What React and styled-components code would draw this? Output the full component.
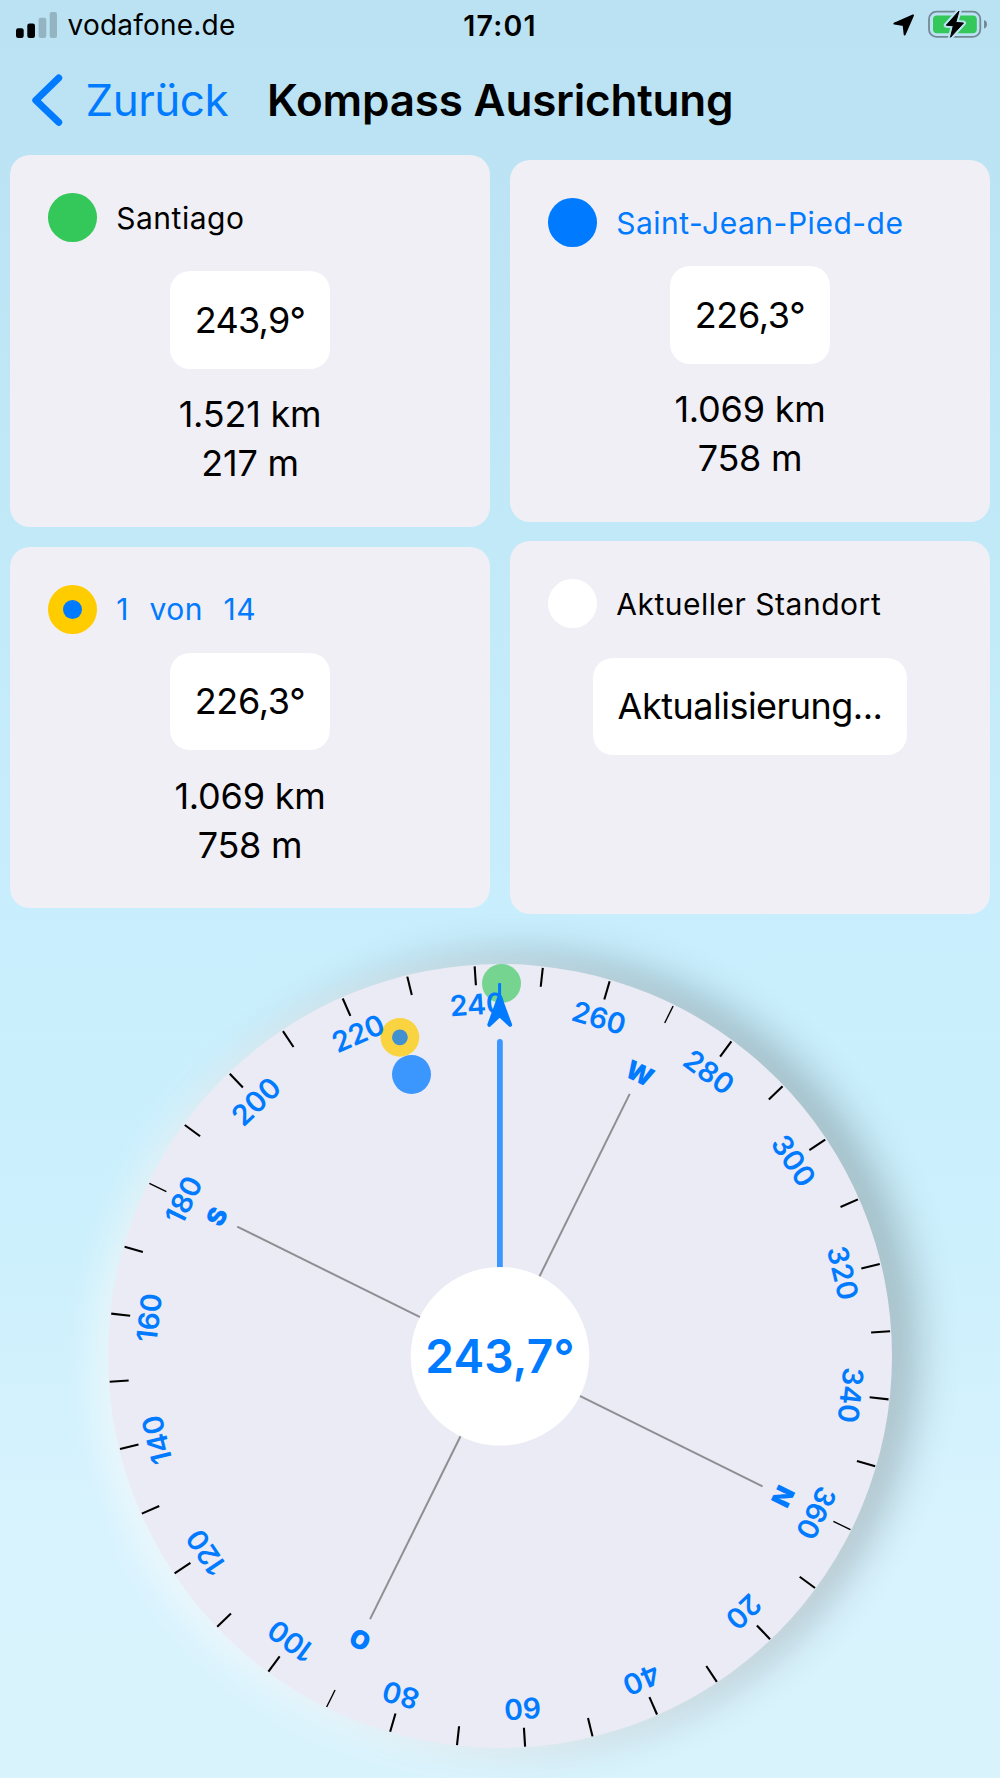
import React from "react";
import styled, { createGlobalStyle } from "styled-components";

const BLUE = "#007aff";

const GlobalStyle = createGlobalStyle`
  * { box-sizing: border-box; }
  body {
    margin: 0;
    font-family: Inter, "Liberation Sans", sans-serif;
    color: #000;
  }
`;

const Screen = styled.main`
  display: flex;
  flex-direction: column;
  width: 1000px;
  height: 1778px;
  overflow: hidden;
  background: linear-gradient(180deg, #bae2f3 0%, #bce4f4 12%, #c2e9f8 30%, #c8eefd 50%, #ccf0fc 70%, #d9f3fe 88%, #d9f3fd 100%);
`;

const StatusBar = styled.header`
  display: grid;
  grid-template-columns: 1fr auto 1fr;
  align-items: center;
  height: 50px;
  padding: 0 12px;
`;

const Carrier = styled.div`
  display: flex;
  align-items: center;
  gap: 10.5px;
  padding-left: 4px;
  font-size: 28px;
  letter-spacing: 0.22px;
`;

const Clock = styled.div`
  font-size: 28.5px;
  font-weight: 600;
  letter-spacing: 1.2px;
`;

const StatusIcons = styled.div`
  display: flex;
  justify-content: flex-end;
  align-items: center;
  gap: 13px;
`;

const Icon = styled.svg`
  display: block;
  flex: none;
`;

const NavBar = styled.nav`
  display: flex;
  align-items: center;
  height: 105px;
  padding: 0 0 6px 31px;
`;

const BackButton = styled.button`
  display: flex;
  align-items: center;
  gap: 22.5px;
  width: 236px;
  padding: 0;
  border: 0;
  background: none;
  color: ${BLUE};
  font: 400 44px Inter, "Liberation Sans", sans-serif;
  letter-spacing: -0.5px;
`;

const Title = styled.h1`
  margin: 0;
  font-size: 44px;
  font-weight: 600;
  white-space: nowrap;
  letter-spacing: -0.2px;
`;

const CardGrid = styled.section`
  display: grid;
  grid-template-columns: 480px 480px;
  grid-template-rows: 371.6px 372.8px;
  gap: 14.6px 20px;
  align-items: center;
  padding: 0 10px;
`;

const Card = styled.article`
  display: flex;
  flex-direction: column;
  align-items: center;
  height: ${(p) => (p.$fill ? "100%" : "auto")};
  padding: 38.3px 38px 38.6px;
  border-radius: 20px;
  background: #f0eff5;
`;

const CardHeader = styled.div`
  display: flex;
  align-items: center;
  align-self: stretch;
  gap: 19.5px;
  height: 48.7px;
  margin-bottom: ${(p) => p.$gap}px;
`;

const Dot = styled.span`
  display: flex;
  align-items: center;
  justify-content: center;
  flex: none;
  width: 48.7px;
  height: 48.7px;
  border-radius: 50%;
  background: ${(p) => p.$color};

  &::after {
    content: "";
    width: 19px;
    height: 19px;
    border-radius: 50%;
    background: ${(p) => p.$core || "transparent"};
  }
`;

const Place = styled.span`
  font-size: 30px;
  line-height: 36px;
  white-space: pre;
  color: ${(p) => (p.$link ? BLUE : "#000")};
  letter-spacing: 0.52px;
  word-spacing: ${(p) => p.$words || 0}px;
`;

const Reading = styled.div`
  display: flex;
  justify-content: center;
  width: ${(p) => p.$width}px;
  padding: 24.5px 0 24.1px;
  border-radius: 20px;
  background: #fff;
  font-size: 36px;
  line-height: 49px;
  letter-spacing: ${(p) => p.$spacing}px;
`;

const Measures = styled.div`
  margin-top: 21.3px;
  font-size: 36px;
  line-height: 49px;
  text-align: center;
  letter-spacing: -0.22px;
`;

const CompassArea = styled.section`
  display: flex;
  justify-content: center;
  padding-top: 50.3px;
`;

const Dial = styled.div`
  flex: none;
  width: 784px;
  height: 784px;
  border-radius: 50%;
  background: #ebebf5;
  box-shadow:
    -14px 5px 32px rgba(255, 255, 255, 0.6),
    24px -8px 44px rgba(0, 0, 0, 0.23);
`;

const DialFace = styled.svg`
  display: block;
  font-family: Inter, "Liberation Sans", sans-serif;
  fill: ${BLUE};
`;

const cards = [
  { name: "Santiago", color: "#34c759", gap: 29.4, value: "243,9°", spacing: -0.75, distance: "1.521 km", height: "217 m" },
  { name: "Saint-Jean-Pied-de", color: BLUE, link: true, gap: 19, value: "226,3°", spacing: -0.3, distance: "1.069 km", height: "758 m" },
  { name: "1  von  14", color: "#ffcc00", core: BLUE, link: true, words: 1.3, gap: 19, value: "226,3°", spacing: -0.3, distance: "1.069 km", height: "758 m" },
  { name: "Aktueller Standort", color: "#fff", gap: 29.6, value: "Aktualisierung...", spacing: -0.5, width: 314, fill: true },
];

const HEADING = 243.7;
const ticks = Array.from({ length: 36 }, (_, i) => (i + 1) * 10);
const cardinals = [["N", 0], ["O", 90], ["S", 180], ["W", 270]];

function SignalIcon() {
  return (
    <Icon width="41" height="26" viewBox="0 0 41 26">
      <rect x="0" y="16.3" width="7.7" height="9.7" rx="2.2" />
      <rect x="11.3" y="11.5" width="7.7" height="14.5" rx="2.2" />
      <rect x="22.6" y="5.8" width="7.7" height="20.2" rx="2.2" fill="#94b4c2" />
      <rect x="33.7" y="0" width="7.3" height="26" rx="2.2" fill="#94b4c2" />
    </Icon>
  );
}

function LocationIcon() {
  return (
    <Icon width="22" height="22" viewBox="0 0 22 22">
      <path d="M20 1.4 1.4 9.6 10.6 11 11.7 20.4Z" stroke="#000" strokeWidth="2" strokeLinejoin="round" />
    </Icon>
  );
}

function BatteryIcon() {
  const bolt = "M31 1 18.3 15.2 25.3 15.8 22.5 27.3 35.5 13 27.8 12.4Z";
  return (
    <Icon width="60" height="30" viewBox="0 0 60 30">
      <rect x="1" y="1.7" width="51.3" height="25.2" rx="7.5" fill="none" stroke="#728a96" strokeWidth="1.8" />
      <rect x="5" y="5.4" width="43.8" height="17.8" rx="4" fill="#34c759" />
      <path d="M56 10Q59 11 59 14.3Q59 17.6 56 18.6Z" fill="#728a96" />
      <path d={bolt} fill="#bbe3f4" stroke="#bbe3f4" strokeWidth="5" strokeLinejoin="round" />
      <path d={bolt} stroke="#000" strokeWidth="1" strokeLinejoin="round" />
    </Icon>
  );
}

function BackIcon() {
  return (
    <Icon width="32" height="52" viewBox="0 0 32 52">
      <path d="M27.7 4 4.8 26.2 27.7 48.3" fill="none" stroke={BLUE} strokeWidth="7" strokeLinecap="round" strokeLinejoin="round" />
    </Icon>
  );
}

function Compass() {
  return (
    <DialFace width="784" height="784" viewBox="-392 -392 784 784">
      <circle cx="-88.5" cy="-281.6" r="19.5" opacity="0.75" />
      <circle cx="-100.1" cy="-318.7" r="19.4" fill="#fad341" />
      <circle cx="-100.1" cy="-318.7" r="7.9" fill="#4190d0" />
      <circle cx="1.5" cy="-372.5" r="19.5" fill="#76d491" />
      <g transform={`translate(-0.1 0.5) rotate(${-HEADING})`}>
        {ticks.map((deg) => (
          <g key={deg} transform={`rotate(${deg})`}>
            <line y1="-391" y2="-372" stroke="#000" strokeWidth={deg % 90 === 0 ? 1.4 : 2.1} />
            {deg % 20 === 0 && (
              <text y="-342.7" fontSize="28.5" fontWeight="600" letterSpacing="-0.2" textAnchor="middle">{deg}</text>
            )}
          </g>
        ))}
        {cardinals.map(([letter, deg]) => (
          <g key={letter} transform={`rotate(${deg})`}>
            <line y1="-293" y2="-80" stroke="#8e8e93" strokeWidth="2" />
            <text y="-306.5" fontSize="25.5" fontWeight="900" textAnchor="middle">{letter}</text>
          </g>
        ))}
      </g>
      <line x1="-0.1" y1="-314" x2="-0.1" y2="-80" stroke="#3c96ff" strokeWidth="5.8" strokeLinecap="round" />
      <rect x="-1.9" y="-373" width="3" height="24" rx="1" />
      <path d="M-0.4 -359.5 10.1 -331.2 -0.4 -341 -10.7 -331.2Z" stroke={BLUE} strokeWidth="4" strokeLinejoin="round" />
      <circle r="89.3" cy="0.3" fill="#fff" />
      <text x="0" y="17" fontSize="46" fontWeight="600" letterSpacing="0.2" textAnchor="middle">243,7°</text>
    </DialFace>
  );
}

export default function App() {
  return (
    <Screen>
      <GlobalStyle />
      <StatusBar>
        <Carrier>
          <SignalIcon />
          vodafone.de
        </Carrier>
        <Clock>17:01</Clock>
        <StatusIcons>
          <LocationIcon />
          <BatteryIcon />
        </StatusIcons>
      </StatusBar>
      <NavBar>
        <BackButton>
          <BackIcon />
          Zurück
        </BackButton>
        <Title>Kompass Ausrichtung</Title>
      </NavBar>
      <CardGrid>
        {cards.map((c) => (
          <Card key={c.name} $fill={c.fill}>
            <CardHeader $gap={c.gap}>
              <Dot $color={c.color} $core={c.core} />
              <Place $link={c.link} $words={c.words}>{c.name}</Place>
            </CardHeader>
            <Reading $width={c.width || 160} $spacing={c.spacing}>{c.value}</Reading>
            {c.distance && (
              <Measures>
                <div>{c.distance}</div>
                <div>{c.height}</div>
              </Measures>
            )}
          </Card>
        ))}
      </CardGrid>
      <CompassArea>
        <Dial>
          <Compass />
        </Dial>
      </CompassArea>
    </Screen>
  );
}
